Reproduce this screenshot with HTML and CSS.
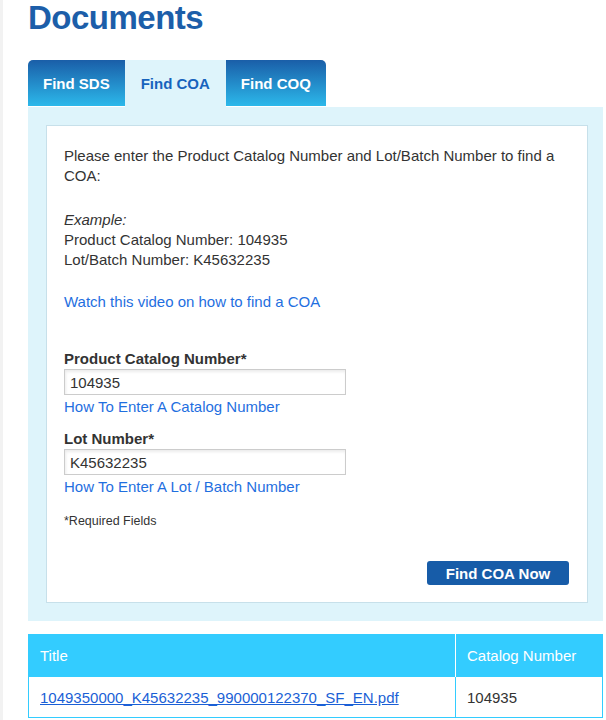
FILE: index.html
```html
<!DOCTYPE html>
<html lang="en">
<head>
<meta charset="utf-8">
<title>Documents</title>
<link rel="stylesheet" href="styles.css">
</head>
<body>
<div class="page">
  <h1 class="title">Documents</h1>
  <div class="tabs">
    <div class="tab tab-first">Find SDS</div>
    <div class="tab tab-active">Find COA</div>
    <div class="tab tab-last">Find COQ</div>
  </div>
  <div class="panel">
    <div class="box">
      <p class="intro">Please enter the Product Catalog Number and Lot/Batch Number to find a COA:</p>
      <p class="example"><em>Example:</em><br>Product Catalog Number: 104935<br>Lot/Batch Number: K45632235</p>
      <a class="link video" href="#">Watch this video on how to find a COA</a>
      <label class="label">Product Catalog Number*</label>
      <input class="field" type="text" value="104935">
      <a class="link help" href="#">How To Enter A Catalog Number</a>
      <label class="label label-second">Lot Number*</label>
      <input class="field" type="text" value="K45632235">
      <a class="link help" href="#">How To Enter A Lot / Batch Number</a>
      <div class="required">*Required Fields</div>
      <div class="actions">
        <button class="btn" type="button">Find COA Now</button>
      </div>
    </div>
  </div>
  <table class="results">
    <thead>
      <tr><th class="col-title">Title</th><th class="col-cat">Catalog Number</th></tr>
    </thead>
    <tbody>
      <tr><td><a class="file" href="#">1049350000_K45632235_990000122370_SF_EN.pdf</a></td><td>104935</td></tr>
    </tbody>
  </table>
</div>
</body>
</html>
```

FILE: styles.css
```css
* { box-sizing: border-box; }
html, body { margin: 0; padding: 0; }
body {
  background: #fff;
  font-family: "Liberation Sans", Arial, sans-serif;
  color: #333;
  font-size: 15px;
  border-left: 3px solid #f2f2f2;
  min-height: 720px;
}
.page {
  margin-left: 25px;
  width: 575px;
}
.title {
  margin: 0;
  padding-top: 1px;
  font-size: 33px;
  line-height: 34px;
  letter-spacing: -0.5px;
  font-weight: bold;
  color: #1c5ea9;
  height: 60px;
}
.tabs {
  display: flex;
  height: 47px;
}
.tab {
  height: 46px;
  line-height: 45px;
  padding: 1px 15px 0;
  font-weight: bold;
  font-size: 15px;
  color: #fff;
  background: linear-gradient(#1a5ea8, #2cb8ea);
}
.tab-first { border-top-left-radius: 5px; }
.tab-last { border-top-right-radius: 5px; }
.tab-active {
  height: 47px;
  background: #def4fb;
  color: #1763bd;
  padding: 1px 16px 0;
}
.panel {
  background: #def4fb;
  padding: 18px 15px 18px 18px;
}
.box {
  background: #fff;
  border: 1px solid #c7e0ea;
  padding: 20px 18px 17px 17px;
  display: flex;
  flex-direction: column;
  align-items: flex-start;
}
.intro, .example {
  margin: 0;
  line-height: 20px;
}
.intro { margin-bottom: 24px; }
.example { margin-bottom: 22px; }
.link {
  color: #1f6fdf;
  text-decoration: none;
  line-height: 20px;
}
.video { margin-bottom: 37px; }
.label {
  font-weight: bold;
  line-height: 20px;
}
.label-second { margin-top: 12px; }
.field {
  width: 282px;
  height: 26px;
  border: 1px solid #cccccc;
  box-shadow: inset 1px 2px 3px rgba(0,0,0,0.08);
  padding: 0 5px;
  font-family: "Liberation Sans", Arial, sans-serif;
  font-size: 15px;
  color: #333;
  margin: 0;
}
.help { margin-top: 2px; }
.required {
  margin-top: 16px;
  font-size: 12.5px;
  line-height: 17px;
}
.actions {
  align-self: stretch;
  display: flex;
  justify-content: flex-end;
  margin-top: 31px;
}
.btn {
  width: 142px;
  height: 24px;
  background: #175ca8;
  color: #fff;
  border: 0;
  border-radius: 3px;
  font-family: "Liberation Sans", Arial, sans-serif;
  font-weight: bold;
  font-size: 15px;
  padding: 0;
}
.results {
  margin-top: 13px;
  width: 575px;
  border-collapse: collapse;
  border: 1px solid #33ccff;
}
.results th {
  background: #33ccff;
  color: #fff;
  font-weight: normal;
  text-align: left;
  height: 42px;
  padding: 0 11px;
  font-size: 15px;
}
.results th.col-title { width: 427px; border-right: 1px solid #fff; }
.results td {
  height: 41px;
  padding: 0 11px;
  border: 1px solid #33ccff;
  font-size: 15px;
}
.file {
  color: #1a5fd6;
  text-decoration: underline;
}
```
